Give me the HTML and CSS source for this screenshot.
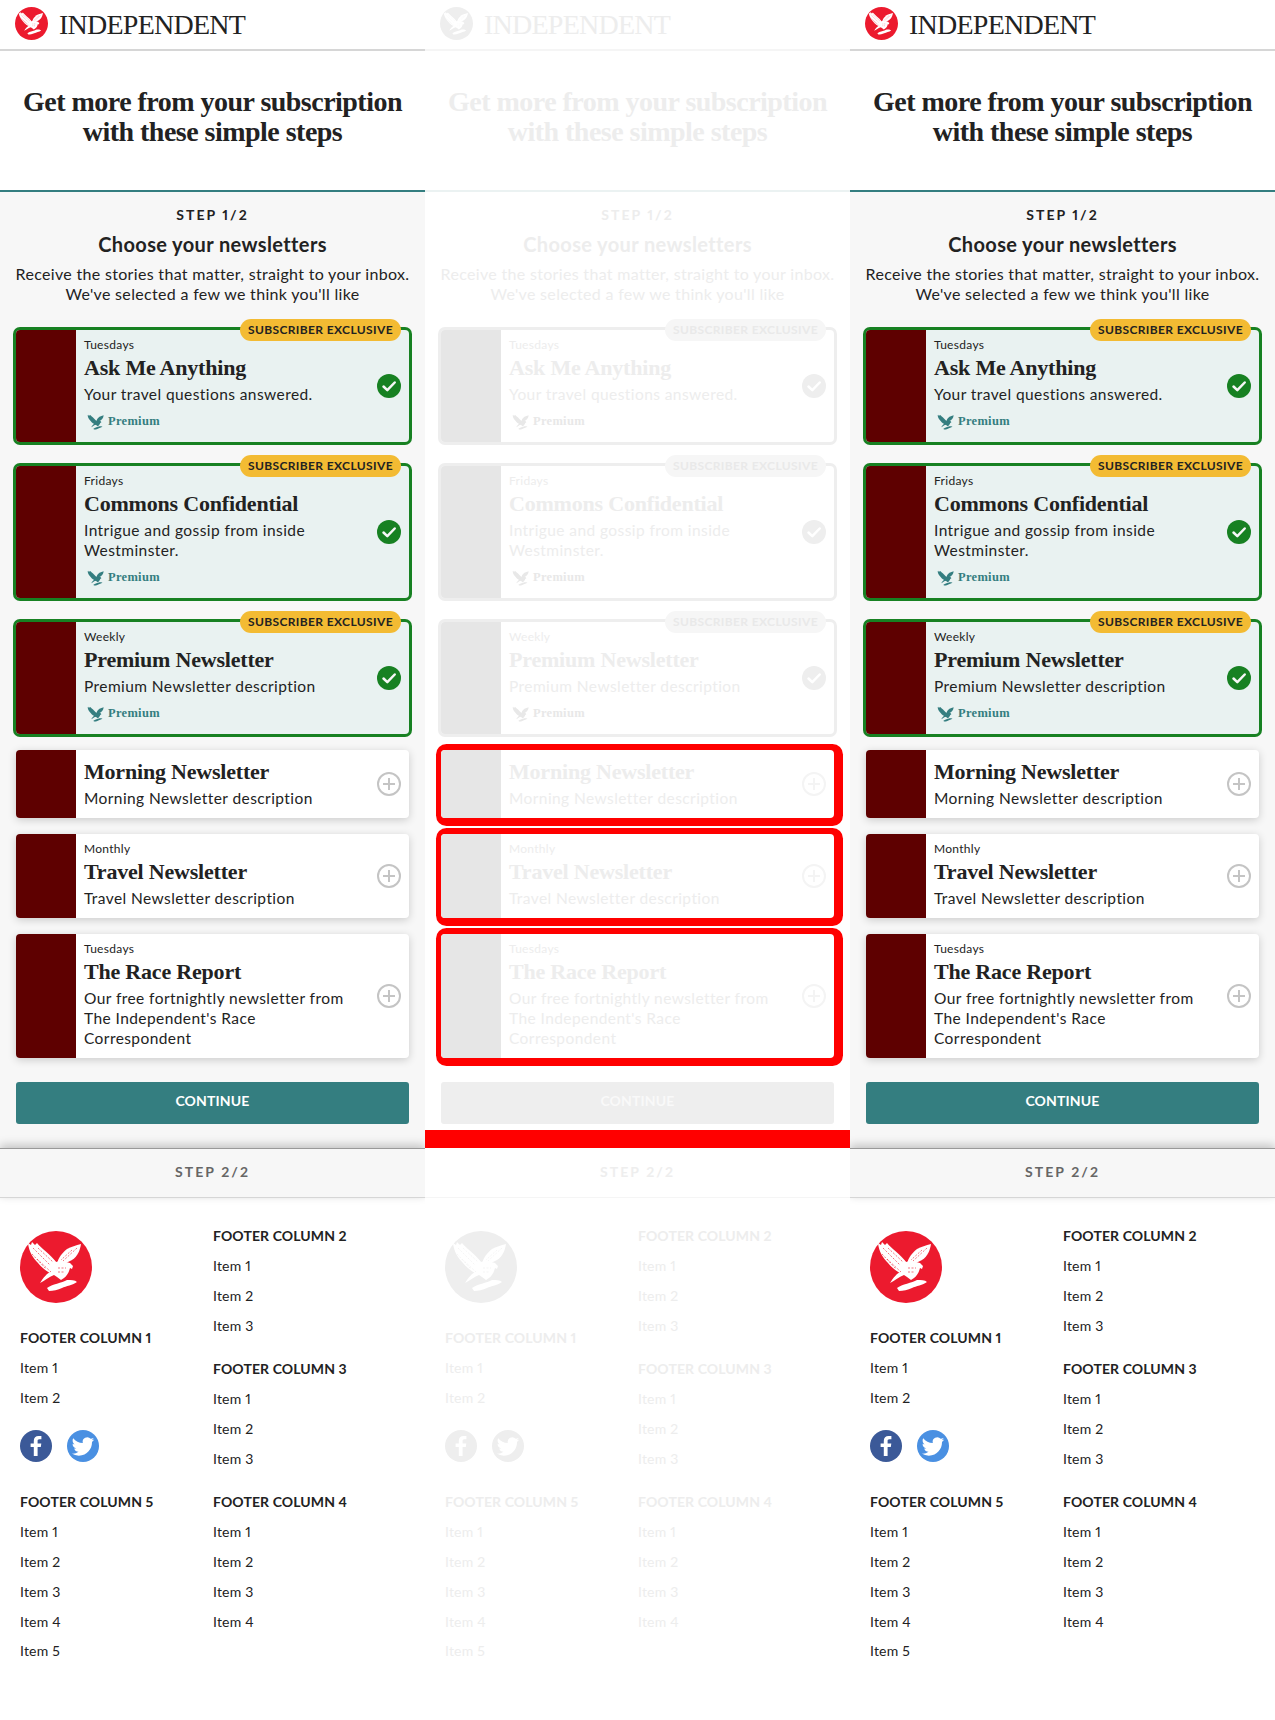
FILE: index.html
```html
<!DOCTYPE html>
<html lang="en">
<head>
<meta charset="utf-8">
<title>Independent newsletters</title>
<link rel="stylesheet" href="styles.css">
</head>
<body>
<svg class="sprite" aria-hidden="true">
  <defs>
    <symbol id="eagle" viewBox="0 0 72 72">
      <path d="M8 12L11 14L12 11L15 14L17 12C21 17 30 23 37 32L39 38L35 44C28 42 22 37 18 32C13 27 9 21 8 12Z"/>
      <path d="M61 13C60 19 58 25 52 29L44 33L37 33C38 27 42 22 47 18C51 16 56 14 61 13Z"/>
      <path d="M36 31C41 30 47 31 50 32L53 35L52 38L50 37C49 41 47 45 44 47L41 49L37 46L34 44C29 46 24 50 20 52C23 47 27 42 32 40Z"/>
      <path d="M27 57C32 53 42 52 47 49C51 49 55 49 57 51C53 54 46 55 42 57C38 59 33 60 29 60Z"/>
    </symbol>
    <symbol id="logo" viewBox="0 0 72 72">
      <circle class="logo-disc" cx="36" cy="36" r="36"/>
      <use class="logo-bird" href="#eagle" width="72" height="72"/>
      <path class="logo-feather" d="M13 17L30 34M18 17L33 31M12 23L26 38M17 28L31 41M57 17L43 30M52 19L41 29M38 37L46 37M38 41L45 41"/>
    </symbol>
    <symbol id="mini" viewBox="6 10 56 50">
      <use href="#eagle" width="72" height="72"/>
    </symbol>
    <symbol id="check" viewBox="0 0 24 24">
      <circle class="check-disc" cx="12" cy="12" r="12"/>
      <path class="check-mark" d="M6.5 12.5l3.8 3.6 7.4-7.6"/>
    </symbol>
    <symbol id="plus" viewBox="0 0 24 24">
      <circle class="plus-line" cx="12" cy="12" r="11"/>
      <path class="plus-line" d="M12 6v12M6 12h12"/>
    </symbol>
    <symbol id="fb" viewBox="0 0 32 32">
      <circle class="fb-disc" cx="16" cy="16" r="16"/>
      <path class="social-mark" d="M17.6 26V17h3.2l.5-3.6h-3.7v-2.3c0-1.1.3-1.8 1.8-1.8h2V6.100c-.4 0-1.500-.1-2.900-.1-2.800 0-4.700 1.700-4.700 4.800v2.600h-3.200V17h3.200v9z"/>
    </symbol>
    <symbol id="tw" viewBox="-5 -5.500 34 34">
      <circle class="tw-disc" cx="12" cy="11.500" r="17"/>
      <path class="social-mark" d="M23.953 4.570a10 10 0 01-2.825.775 4.958 4.958 0 002.163-2.723c-.951.555-2.005.959-3.127 1.184a4.920 4.920 0 00-8.384 4.482C7.690 8.095 4.067 6.130 1.640 3.162a4.822 4.822 0 00-.666 2.475c0 1.710.870 3.213 2.188 4.096a4.904 4.904 0 01-2.228-.616v.060a4.923 4.923 0 003.946 4.827 4.996 4.996 0 01-2.212.085 4.936 4.936 0 004.604 3.417 9.867 9.867 0 01-6.102 2.105c-.390 0-.779-.023-1.170-.067a13.995 13.995 0 007.557 2.209c9.053 0 13.998-7.496 13.998-13.985 0-.210 0-.420-.015-.630A9.935 9.935 0 0024 4.590z"/>
    </symbol>
  </defs>
</svg>
<main class="page">

  <div class="col">
    <header class="topbar"><svg class="topbar-logo"><use href="#logo"/></svg><span class="wordmark">INDEPENDENT</span></header>
    <section class="hero"><h1>Get more from your subscription<br>with these simple steps</h1></section>
    <section class="step-one">
      <div class="step-label">STEP 1/2</div>
      <h2>Choose your newsletters</h2>
      <p class="intro">Receive the stories that matter, straight to your inbox.<br>We've selected a few we think you'll like</p>
      <ul class="cards">
        <li class="card card-selected"><span class="badge">SUBSCRIBER EXCLUSIVE</span><div class="thumb"></div><div class="card-body"><div class="meta">Tuesdays</div><h3>Ask Me Anything</h3><p>Your travel questions answered.</p><div class="premium"><svg class="mini"><use href="#mini"/></svg>Premium</div></div><svg class="state"><use href="#check"/></svg></li>
        <li class="card card-selected"><span class="badge">SUBSCRIBER EXCLUSIVE</span><div class="thumb"></div><div class="card-body"><div class="meta">Fridays</div><h3>Commons Confidential</h3><p>Intrigue and gossip from inside Westminster.</p><div class="premium"><svg class="mini"><use href="#mini"/></svg>Premium</div></div><svg class="state"><use href="#check"/></svg></li>
        <li class="card card-selected"><span class="badge">SUBSCRIBER EXCLUSIVE</span><div class="thumb"></div><div class="card-body"><div class="meta">Weekly</div><h3>Premium Newsletter</h3><p>Premium Newsletter description</p><div class="premium"><svg class="mini"><use href="#mini"/></svg>Premium</div></div><svg class="state"><use href="#check"/></svg></li>
        <li class="card card-plain"><div class="thumb"></div><div class="card-body"><h3>Morning Newsletter</h3><p>Morning Newsletter description</p></div><svg class="state"><use href="#plus"/></svg></li>
        <li class="card card-plain"><div class="thumb"></div><div class="card-body"><div class="meta">Monthly</div><h3>Travel Newsletter</h3><p>Travel Newsletter description</p></div><svg class="state"><use href="#plus"/></svg></li>
        <li class="card card-plain"><div class="thumb"></div><div class="card-body"><div class="meta">Tuesdays</div><h3>The Race Report</h3><p>Our free fortnightly newsletter from The Independent's Race Correspondent</p></div><svg class="state"><use href="#plus"/></svg></li>
      </ul>
      <button class="continue" type="button">CONTINUE</button>
    </section>
    <section class="step-two">STEP 2/2</section>
    <footer class="footer">
      <div class="footer-col">
        <svg class="footer-logo"><use href="#logo"/></svg>
        <h4 class="fh fh-first">FOOTER COLUMN 1</h4>
        <ul class="flist"><li>Item 1</li><li>Item 2</li></ul>
        <div class="social"><svg class="social-icon"><use href="#fb"/></svg><svg class="social-icon"><use href="#tw"/></svg></div>
        <h4 class="fh fh-last">FOOTER COLUMN 5</h4>
        <ul class="flist"><li>Item 1</li><li>Item 2</li><li>Item 3</li><li>Item 4</li><li>Item 5</li></ul>
      </div>
      <div class="footer-col">
        <h4 class="fh">FOOTER COLUMN 2</h4>
        <ul class="flist"><li>Item 1</li><li>Item 2</li><li>Item 3</li></ul>
        <h4 class="fh fh-next">FOOTER COLUMN 3</h4>
        <ul class="flist"><li>Item 1</li><li>Item 2</li><li>Item 3</li></ul>
        <h4 class="fh fh-next">FOOTER COLUMN 4</h4>
        <ul class="flist"><li>Item 1</li><li>Item 2</li><li>Item 3</li><li>Item 4</li></ul>
      </div>
    </footer>
  </div>

  <div class="col col-ghost">
    <header class="topbar"><svg class="topbar-logo"><use href="#logo"/></svg><span class="wordmark">INDEPENDENT</span></header>
    <section class="hero"><h1>Get more from your subscription<br>with these simple steps</h1></section>
    <section class="step-one">
      <div class="step-label">STEP 1/2</div>
      <h2>Choose your newsletters</h2>
      <p class="intro">Receive the stories that matter, straight to your inbox.<br>We've selected a few we think you'll like</p>
      <ul class="cards">
        <li class="card card-selected"><span class="badge">SUBSCRIBER EXCLUSIVE</span><div class="thumb"></div><div class="card-body"><div class="meta">Tuesdays</div><h3>Ask Me Anything</h3><p>Your travel questions answered.</p><div class="premium"><svg class="mini"><use href="#mini"/></svg>Premium</div></div><svg class="state"><use href="#check"/></svg></li>
        <li class="card card-selected"><span class="badge">SUBSCRIBER EXCLUSIVE</span><div class="thumb"></div><div class="card-body"><div class="meta">Fridays</div><h3>Commons Confidential</h3><p>Intrigue and gossip from inside Westminster.</p><div class="premium"><svg class="mini"><use href="#mini"/></svg>Premium</div></div><svg class="state"><use href="#check"/></svg></li>
        <li class="card card-selected"><span class="badge">SUBSCRIBER EXCLUSIVE</span><div class="thumb"></div><div class="card-body"><div class="meta">Weekly</div><h3>Premium Newsletter</h3><p>Premium Newsletter description</p><div class="premium"><svg class="mini"><use href="#mini"/></svg>Premium</div></div><svg class="state"><use href="#check"/></svg></li>
        <li class="card card-plain"><div class="thumb"></div><div class="card-body"><h3>Morning Newsletter</h3><p>Morning Newsletter description</p></div><svg class="state"><use href="#plus"/></svg></li>
        <li class="card card-plain"><div class="thumb"></div><div class="card-body"><div class="meta">Monthly</div><h3>Travel Newsletter</h3><p>Travel Newsletter description</p></div><svg class="state"><use href="#plus"/></svg></li>
        <li class="card card-plain"><div class="thumb"></div><div class="card-body"><div class="meta">Tuesdays</div><h3>The Race Report</h3><p>Our free fortnightly newsletter from The Independent's Race Correspondent</p></div><svg class="state"><use href="#plus"/></svg></li>
      </ul>
      <button class="continue" type="button">CONTINUE</button>
    </section>
    <section class="step-two">STEP 2/2</section>
    <footer class="footer">
      <div class="footer-col">
        <svg class="footer-logo"><use href="#logo"/></svg>
        <h4 class="fh fh-first">FOOTER COLUMN 1</h4>
        <ul class="flist"><li>Item 1</li><li>Item 2</li></ul>
        <div class="social"><svg class="social-icon"><use href="#fb"/></svg><svg class="social-icon"><use href="#tw"/></svg></div>
        <h4 class="fh fh-last">FOOTER COLUMN 5</h4>
        <ul class="flist"><li>Item 1</li><li>Item 2</li><li>Item 3</li><li>Item 4</li><li>Item 5</li></ul>
      </div>
      <div class="footer-col">
        <h4 class="fh">FOOTER COLUMN 2</h4>
        <ul class="flist"><li>Item 1</li><li>Item 2</li><li>Item 3</li></ul>
        <h4 class="fh fh-next">FOOTER COLUMN 3</h4>
        <ul class="flist"><li>Item 1</li><li>Item 2</li><li>Item 3</li></ul>
        <h4 class="fh fh-next">FOOTER COLUMN 4</h4>
        <ul class="flist"><li>Item 1</li><li>Item 2</li><li>Item 3</li><li>Item 4</li></ul>
      </div>
    </footer>
  </div>

  <div class="col">
    <header class="topbar"><svg class="topbar-logo"><use href="#logo"/></svg><span class="wordmark">INDEPENDENT</span></header>
    <section class="hero"><h1>Get more from your subscription<br>with these simple steps</h1></section>
    <section class="step-one">
      <div class="step-label">STEP 1/2</div>
      <h2>Choose your newsletters</h2>
      <p class="intro">Receive the stories that matter, straight to your inbox.<br>We've selected a few we think you'll like</p>
      <ul class="cards">
        <li class="card card-selected"><span class="badge">SUBSCRIBER EXCLUSIVE</span><div class="thumb"></div><div class="card-body"><div class="meta">Tuesdays</div><h3>Ask Me Anything</h3><p>Your travel questions answered.</p><div class="premium"><svg class="mini"><use href="#mini"/></svg>Premium</div></div><svg class="state"><use href="#check"/></svg></li>
        <li class="card card-selected"><span class="badge">SUBSCRIBER EXCLUSIVE</span><div class="thumb"></div><div class="card-body"><div class="meta">Fridays</div><h3>Commons Confidential</h3><p>Intrigue and gossip from inside Westminster.</p><div class="premium"><svg class="mini"><use href="#mini"/></svg>Premium</div></div><svg class="state"><use href="#check"/></svg></li>
        <li class="card card-selected"><span class="badge">SUBSCRIBER EXCLUSIVE</span><div class="thumb"></div><div class="card-body"><div class="meta">Weekly</div><h3>Premium Newsletter</h3><p>Premium Newsletter description</p><div class="premium"><svg class="mini"><use href="#mini"/></svg>Premium</div></div><svg class="state"><use href="#check"/></svg></li>
        <li class="card card-plain"><div class="thumb"></div><div class="card-body"><h3>Morning Newsletter</h3><p>Morning Newsletter description</p></div><svg class="state"><use href="#plus"/></svg></li>
        <li class="card card-plain"><div class="thumb"></div><div class="card-body"><div class="meta">Monthly</div><h3>Travel Newsletter</h3><p>Travel Newsletter description</p></div><svg class="state"><use href="#plus"/></svg></li>
        <li class="card card-plain"><div class="thumb"></div><div class="card-body"><div class="meta">Tuesdays</div><h3>The Race Report</h3><p>Our free fortnightly newsletter from The Independent's Race Correspondent</p></div><svg class="state"><use href="#plus"/></svg></li>
      </ul>
      <button class="continue" type="button">CONTINUE</button>
    </section>
    <section class="step-two">STEP 2/2</section>
    <footer class="footer">
      <div class="footer-col">
        <svg class="footer-logo"><use href="#logo"/></svg>
        <h4 class="fh fh-first">FOOTER COLUMN 1</h4>
        <ul class="flist"><li>Item 1</li><li>Item 2</li></ul>
        <div class="social"><svg class="social-icon"><use href="#fb"/></svg><svg class="social-icon"><use href="#tw"/></svg></div>
        <h4 class="fh fh-last">FOOTER COLUMN 5</h4>
        <ul class="flist"><li>Item 1</li><li>Item 2</li><li>Item 3</li><li>Item 4</li><li>Item 5</li></ul>
      </div>
      <div class="footer-col">
        <h4 class="fh">FOOTER COLUMN 2</h4>
        <ul class="flist"><li>Item 1</li><li>Item 2</li><li>Item 3</li></ul>
        <h4 class="fh fh-next">FOOTER COLUMN 3</h4>
        <ul class="flist"><li>Item 1</li><li>Item 2</li><li>Item 3</li></ul>
        <h4 class="fh fh-next">FOOTER COLUMN 4</h4>
        <ul class="flist"><li>Item 1</li><li>Item 2</li><li>Item 3</li><li>Item 4</li></ul>
      </div>
    </footer>
  </div>

</main>
</body>
</html>
```
FILE: styles.css
```css
* { box-sizing: border-box; }
html, body { margin: 0; padding: 0; background: #fff; }
body { font-family: "Lato", "Liberation Sans", sans-serif; font-variant-numeric: proportional-nums; }
ul { list-style: none; margin: 0; padding: 0; }
h1, h2, h3, h4, p { margin: 0; }
.sprite { position: absolute; width: 0; height: 0; }

.page { display: flex; width: 1275px; }

.col {
  width: 425px;
  flex: none;
  overflow: hidden;
  --ink: #222;
  --muted: #666;
  --panel: #f7f7f7;
  --rule: #d6d6d6;
  --accent: #347e80;
  --accent-text: #fff;
  --accent-line: #347e80;
  --logo: #ec1a2e;
  --logo-bird: #fff;
  --green: #178122;
  --mint: #e9f2f1;
  --amber: #f3bb33;
  --badge-ink: #222;
  --thumb: #5e0000;
  --plus: #c4c4c4;
  --premium: #347e80;
  --fb: #3b5998;
  --tw: #4a90e2;
  --plain-shadow: 0 2px 8px rgba(0, 0, 0, .18);
  --step-shadow: 0 -3px 9px rgba(0, 0, 0, .22);
  --step-line: #999;
  background: #fff;
  color: var(--ink);
}
.col-ghost {
  --ink: #ededed;
  --muted: #eee;
  --panel: #fff;
  --rule: #f5f5f5;
  --accent: #eee;
  --accent-text: #f9f9f9;
  --accent-line: #ebf2f2;
  --logo: #eee;
  --logo-bird: #fff;
  --green: #eee;
  --mint: #fff;
  --amber: #f6f6f6;
  --badge-ink: #e9e9e9;
  --thumb: #e6e6e6;
  --plus: #f4f4f4;
  --premium: #e8e8e8;
  --fb: #eee;
  --tw: #eee;
  --plain-shadow: 2px 1px 0 7px #f00;
  --step-shadow: 0 -18px 0 0 #f00;
  --step-line: #fff;
}

/* header */
.topbar {
  display: flex;
  align-items: center;
  height: 51px;
  padding: 0 0 2px 15px;
  border-bottom: 2px solid var(--rule);
}
.topbar-logo { width: 33px; height: 33px; margin-right: 11px; flex: none; }
.logo-disc { fill: var(--logo); }
.logo-bird { fill: var(--logo-bird); }
.logo-feather { fill: none; stroke: var(--logo); stroke-width: .6; stroke-dasharray: 2 1.5; }
.wordmark {
  font: 400 28px/1 "Liberation Serif", serif;
  letter-spacing: -.75px;
  color: var(--ink);
  padding-top: 2px;
}

.hero {
  height: 141px;
  padding-top: 36px;
  text-align: center;
  border-bottom: 2px solid var(--accent-line);
}
.hero h1 {
  font: 700 28px/30px "Liberation Serif", serif;
  letter-spacing: -.52px;
}

/* step one */
.step-one { background: var(--panel); padding: 13px 0 24px; text-align: center; }
.step-label {
  font-weight: 700;
  font-size: 14px;
  line-height: 20px;
  letter-spacing: 2.05px;
}
.step-one h2 {
  margin-top: 7px;
  font-size: 20px;
  line-height: 24px;
  font-weight: 700;
  letter-spacing: .38px;
}
.intro {
  margin-top: 8px;
  font-size: 16px;
  line-height: 20px;
  letter-spacing: .32px;
}

.cards {
  display: flex;
  flex-direction: column;
  gap: 16px;
  margin-top: 18px;
  padding: 0 16px;
  text-align: left;
}
.card {
  position: relative;
  display: flex;
  align-items: stretch;
  border-radius: 4px;
  background: #fff;
}
.card-selected {
  margin-top: 8px;
  background: var(--mint);
  box-shadow: 0 0 0 3px var(--green);
}
.card-plain { box-shadow: var(--plain-shadow); }
.thumb { width: 60px; flex: none; background: var(--thumb); border-radius: 4px 0 0 4px; }
.card-body { flex: 1; min-width: 0; padding: 8px 30px 10px 8px; }
.meta { margin: -1px 0 1px; font-size: 12px; line-height: 16px; letter-spacing: .3px; }
.card-body h3 {
  font: 700 22px/28px "Liberation Serif", serif;
  letter-spacing: -.2px;
}
.card-body p {
  margin-top: 2px;
  font-size: 15.500px;
  line-height: 20px;
  letter-spacing: .42px;
}
.premium {
  display: flex;
  align-items: center;
  height: 28px;
  padding: 7px 0 0 3px;
  font: 700 12.500px/21px "Liberation Serif", serif;
  letter-spacing: .3px;
  color: var(--premium);
}
.mini { width: 17px; height: 16px; margin-right: 4px; fill: var(--premium); }
.state { width: 24px; height: 24px; flex: none; align-self: center; margin-right: 8px; }
.check-disc { fill: var(--green); }
.check-mark { fill: none; stroke: var(--panel); stroke-width: 2.500; stroke-linecap: round; stroke-linejoin: round; }
.plus-line { fill: none; stroke: var(--plus); stroke-width: 2; }

.badge {
  position: absolute;
  top: -11px;
  right: 8px;
  height: 22px;
  padding: 0 8px;
  border-radius: 11px;
  background: var(--amber);
  color: var(--badge-ink);
  font-size: 12px;
  font-weight: 700;
  line-height: 22px;
  letter-spacing: .38px;
  white-space: nowrap;
}

.continue {
  display: block;
  width: 393px;
  height: 42px;
  margin: 24px 16px 0;
  border: 0;
  border-radius: 3px;
  background: var(--accent);
  color: var(--accent-text);
  font: 700 14px/38px "Lato", "Liberation Sans", sans-serif;
  padding: 0 0 4px;
  letter-spacing: .15px;
}

/* step two */
.step-two {
  position: relative;
  height: 50px;
  border-top: 1px solid var(--step-line);
  border-bottom: 1px solid var(--rule);
  background: var(--panel);
  box-shadow: var(--step-shadow);
  color: var(--muted);
  text-align: center;
  font-weight: 700;
  font-size: 14px;
  line-height: 46px;
  letter-spacing: 2.1px;
}

/* footer */
.footer { display: flex; padding: 28px 0 0 20px; }
.footer-col { display: flex; flex-direction: column; }
.footer-col:first-child { width: 193px; flex: none; }
.footer-logo { display: block; width: 72px; height: 72px; margin-top: 5px; }
.fh {
  font-size: 14px;
  line-height: 20px;
  font-weight: 700;
  letter-spacing: .1px;
}
.fh-first { margin-top: 25px; }
.fh-next { margin-top: 18px; }
.fh-last { margin-top: 30px; }
.flist { margin-top: 5px; }
.flist li { font-size: 14px; line-height: 30px; letter-spacing: .2px; }
.flist li:nth-child(5) { margin-top: -1px; }
.social { display: flex; gap: 15px; margin-top: 17px; }
.social-icon { width: 32px; height: 32px; }
.fb-disc { fill: var(--fb); }
.tw-disc { fill: var(--tw); }
.social-mark { fill: var(--logo-bird); }
```
